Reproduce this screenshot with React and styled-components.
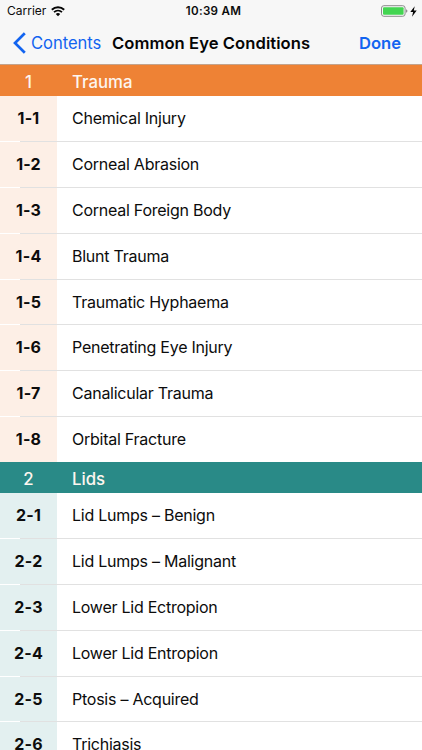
import React from "react";
import styled, { createGlobalStyle } from "styled-components";

const GlobalStyle = createGlobalStyle`
  * {
    box-sizing: border-box;
  }

  body {
    margin: 0;
    overflow: hidden;
    background: #ffffff;
    font-family: Inter, "Liberation Sans", sans-serif;
    color: #0c0c0c;
  }
`;

const Screen = styled.div`
  display: flex;
  flex-direction: column;
  width: 422px;
  height: 750px;
  overflow: hidden;
`;

const TopArea = styled.header`
  flex: none;
  height: 65.4px;
  background: #f7f7f7;
  border-bottom: 1px solid #c3a38c;
`;

const StatusBar = styled.div`
  display: grid;
  grid-template-columns: 1fr auto 1fr;
  align-items: center;
  height: 22px;
  padding: 0 5px 0 7px;
  font-size: 12px;
  line-height: 22px;
`;

const Carrier = styled.div`
  display: flex;
  align-items: center;
  gap: 5px;
`;

const Time = styled.div`
  font-weight: 600;
  font-size: 11.6px;
  letter-spacing: 0.3px;
  padding-left: 3px;
`;

const Power = styled.div`
  display: flex;
  justify-content: flex-end;
  align-items: center;
  gap: 2px;
`;

const NavBar = styled.nav`
  display: flex;
  align-items: center;
  height: 42px;
  padding: 0 21px 0 13px;
  white-space: nowrap;
`;

const BackButton = styled.div`
  display: flex;
  align-items: center;
  gap: 5px;
  width: 99px;
  color: #1264f0;
  font-size: 16.6px;
  letter-spacing: -0.05px;
`;

const Title = styled.div`
  flex: 1;
  font-weight: 600;
  font-size: 16.6px;
  letter-spacing: 0.06px;
  color: #050505;
`;

const DoneButton = styled.div`
  font-weight: 600;
  font-size: 16.6px;
  color: #1264f0;
`;

const SectionHeader = styled.div`
  display: flex;
  flex: none;
  align-items: center;
  height: 31px;
  padding-top: 3px;
  background: ${({ color }) => color};
  color: #fdf6ef;
  font-size: 16.8px;
  font-weight: 550;
`;

const SectionNumber = styled.div`
  width: 57px;
  margin-right: 15px;
  text-align: center;
  font-weight: 500;
`;

const Row = styled.div`
  position: relative;
  display: flex;
  flex: none;
  height: 45.8px;
  line-height: 45.6px;
  white-space: nowrap;

  &:last-child {
    height: 45.4px;
  }

  &:not(:last-child)::after {
    content: "";
    position: absolute;
    left: 0;
    right: 0;
    bottom: 0;
    height: 1px;
    background: linear-gradient(to right, #ffffff 20px, #e1e1e1 20px);
  }
`;

const RowNumber = styled.div`
  width: 57px;
  background: ${({ tint }) => tint};
  text-align: center;
  font-size: 16px;
  font-weight: 700;
  letter-spacing: 0.2px;
`;

const RowTitle = styled.div`
  padding-left: 15px;
  font-size: 16px;
  letter-spacing: -0.25px;
`;

const Section = styled.section`
  flex: none;
`;

const sections = [
  {
    title: "Trauma",
    color: "#ee8235",
    tint: "#fdefe6",
    items: [
      "Chemical Injury",
      "Corneal Abrasion",
      "Corneal Foreign Body",
      "Blunt Trauma",
      "Traumatic Hyphaema",
      "Penetrating Eye Injury",
      "Canalicular Trauma",
      "Orbital Fracture",
    ],
  },
  {
    title: "Lids",
    color: "#298a87",
    tint: "#e3f0f0",
    items: [
      "Lid Lumps – Benign",
      "Lid Lumps – Malignant",
      "Lower Lid Ectropion",
      "Lower Lid Entropion",
      "Ptosis – Acquired",
      "Trichiasis",
    ],
  },
];

const WifiIcon = () => (
  <svg width="14" height="11" viewBox="0 0 14 11" fill="none" stroke="#050505">
    <path d="M0.8 3.8C4.3 0.4 9.7 0.4 13.2 3.8" strokeWidth="1.9" />
    <path d="M3 6.2C5.3 4 8.7 4 11 6.2" strokeWidth="1.7" />
    <path d="M4.8 8C6.1 6.8 7.9 6.8 9.2 8L7 10.3Z" fill="#050505" stroke="none" />
  </svg>
);

const BatteryIcon = () => (
  <svg width="27" height="12" viewBox="0 0 27 12">
    <rect x="0.5" y="0.7" width="23.6" height="10.6" rx="2.4" fill="#f7f7f7" stroke="#8b8b8b" />
    <rect x="2" y="2.2" width="20.6" height="7.6" rx="1" fill="#43d551" />
    <path d="M25.2 4.2C26.8 4.8 26.8 7.2 25.2 7.8Z" fill="#777777" />
  </svg>
);

const BoltIcon = () => (
  <svg width="7" height="11" viewBox="0 0 7 11">
    <path d="M4.7 0.3L0.3 6.1H3.1L2 10.7L6.7 4.6H3.8Z" fill="#050505" />
  </svg>
);

const BackIcon = () => (
  <svg width="13" height="22" viewBox="0 0 13 22" fill="none">
    <path d="M11.8 1.2L2 11L11.8 20.8" stroke="#1264f0" strokeWidth="2.7" />
  </svg>
);

const App = () => (
  <>
    <GlobalStyle />
    <Screen>
      <TopArea>
        <StatusBar>
          <Carrier>
            <span>Carrier</span>
            <WifiIcon />
          </Carrier>
          <Time>10:39 AM</Time>
          <Power>
            <BatteryIcon />
            <BoltIcon />
          </Power>
        </StatusBar>
        <NavBar>
          <BackButton>
            <BackIcon />
            <span>Contents</span>
          </BackButton>
          <Title>Common Eye Conditions</Title>
          <DoneButton>Done</DoneButton>
        </NavBar>
      </TopArea>
      {sections.map((section, index) => (
        <Section key={section.title}>
          <SectionHeader color={section.color}>
            <SectionNumber>{index + 1}</SectionNumber>
            <span>{section.title}</span>
          </SectionHeader>
          {section.items.map((item, i) => (
            <Row key={item}>
              <RowNumber tint={section.tint}>{`${index + 1}-${i + 1}`}</RowNumber>
              <RowTitle>{item}</RowTitle>
            </Row>
          ))}
        </Section>
      ))}
    </Screen>
  </>
);

export default App;
